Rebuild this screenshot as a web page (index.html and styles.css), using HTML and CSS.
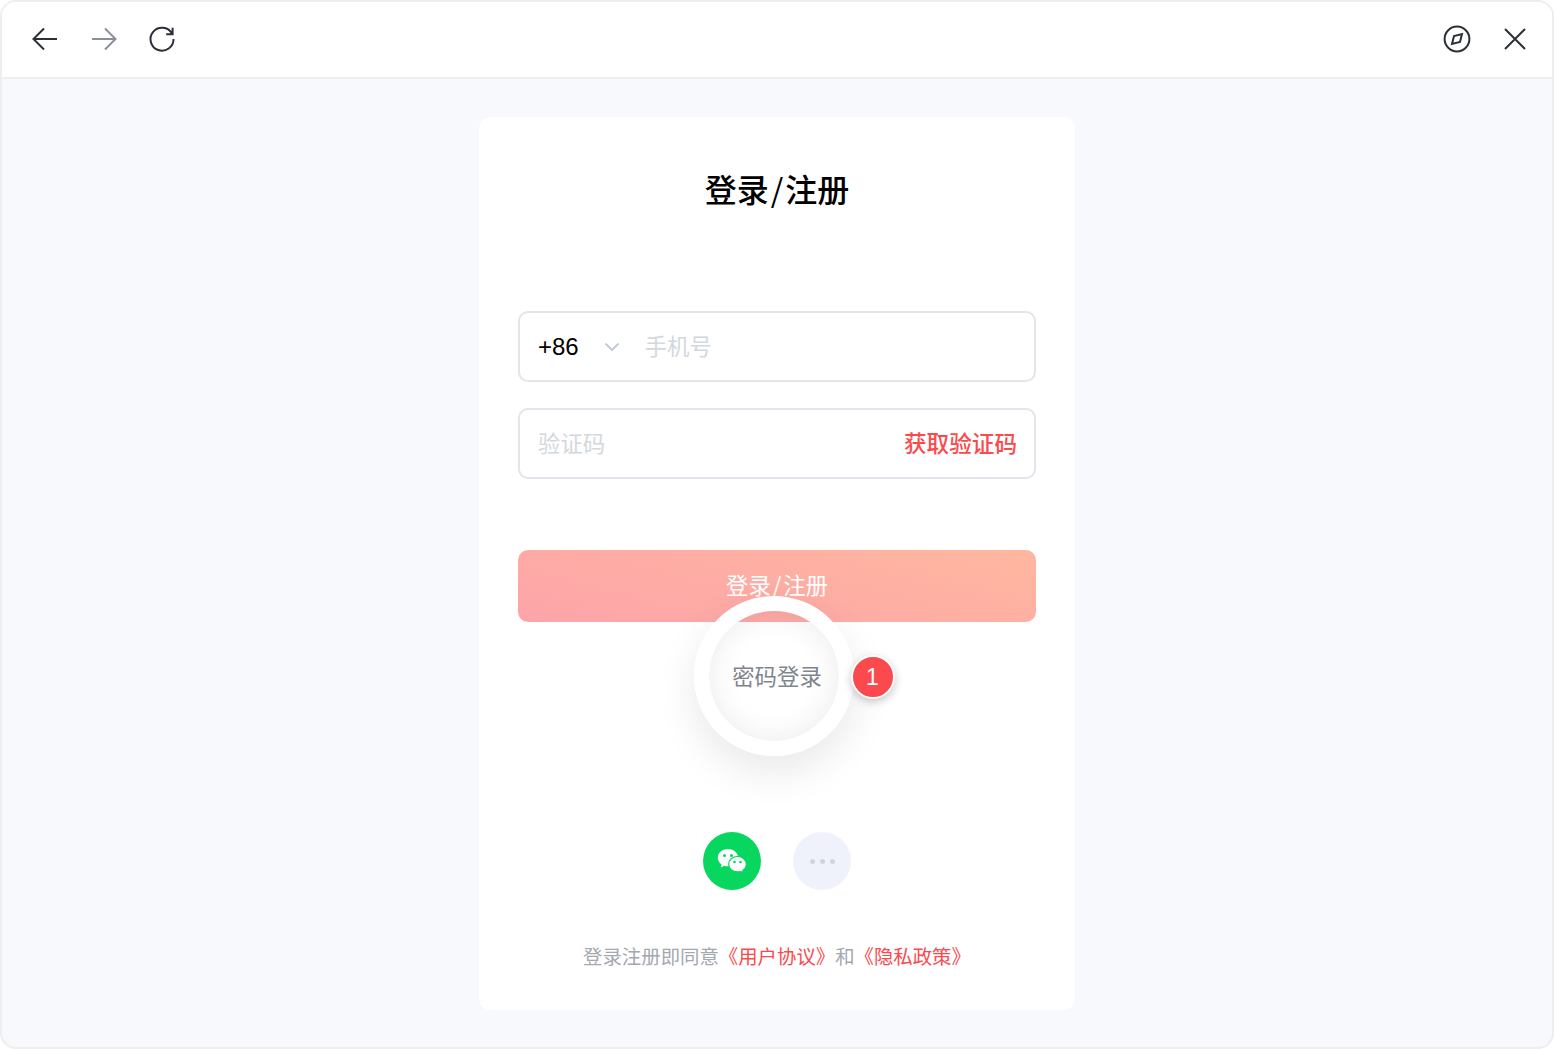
FILE: index.html
```html
<!DOCTYPE html>
<html lang="zh-CN">
<head>
  <meta charset="UTF-8" />
  <meta name="viewport" content="width=device-width, initial-scale=1" />
  <title>登录/注册</title>
  <link rel="stylesheet" href="styles.css">
</head>
<body>
  <div class="window">
    <header class="topbar">
      <div class="topbar-group topbar-nav">
        <svg class="icon" viewBox="0 0 30 30"><path d="M27 15H3.500M14 4.500 3.500 15 14 25.500"/></svg>
        <svg class="icon icon-off" viewBox="0 0 30 30"><path d="M3 15h23.500M16 4.500 26.500 15 16 25.500"/></svg>
        <svg class="icon" viewBox="0 0 30 30"><path d="M25 9.500A11.500 11.500 0 1 0 26.500 15M25.600 3.800v6.400h-6.400"/></svg>
      </div>
      <div class="topbar-group">
        <svg class="icon" viewBox="0 0 30 30"><circle cx="15" cy="15" r="12.400"/><path d="M20 10 18 18l-8 2 2-8z"/></svg>
        <svg class="icon" viewBox="0 0 30 30"><path d="M5 5l20 20M25 5 5 25"/></svg>
      </div>
    </header>

    <main class="content">
      <section class="card">
        <h1 class="title">登录<span class="slash">/</span>注册</h1>

        <form class="login-form">
          <div class="field">
            <span class="area-code">+86</span>
            <svg class="chevron" viewBox="0 0 16 10"><path d="M1.500 1.500 8 8l6.500-6.500"/></svg>
            <input class="field-input" type="tel" placeholder="手机号" />
          </div>
          <div class="field">
            <input class="field-input" type="text" placeholder="验证码" />
            <a class="get-code">获取验证码</a>
          </div>
          <button class="submit" type="button">登录<span class="slash">/</span>注册</button>
        </form>

        <div class="password-login">
          <span>密码登录</span>
          <span class="ring"></span>
          <span class="badge">1</span>
        </div>

        <div class="socials">
          <span class="social social-wechat">
            <svg viewBox="0 0 58 58">
              <path class="bubble" d="M25 17c-5.800 0-10.200 3.900-10.200 8.800 0 2.800 1.500 5.200 3.800 6.800l-.8 2.900 3.400-1.800c1.200.4 2.500.6 3.800.6 5.800 0 10.200-3.900 10.200-8.500S30.800 17 25 17z"/>
              <circle class="eye" cx="21.500" cy="23.500" r="1.500"/>
              <circle class="eye" cx="28.500" cy="23.500" r="1.500"/>
              <path class="bubble bubble-front" d="M34.500 24.500c-5 0-8.800 3.400-8.800 7.700s3.800 7.700 8.800 7.700c1 0 2-.2 3-.4l2.800 1.500-.6-2.600c2.200-1.400 3.600-3.600 3.600-6.200 0-4.300-3.800-7.700-8.800-7.700z"/>
              <circle class="eye" cx="31.500" cy="30" r="1.300"/>
              <circle class="eye" cx="37.500" cy="30" r="1.300"/>
            </svg>
          </span>
          <span class="social social-more">
            <i></i><i></i><i></i>
          </span>
        </div>

        <p class="agreement">登录注册即同意<a>《用户协议》</a>和<a>《隐私政策》</a></p>
      </section>
    </main>
  </div>
</body>
</html>
```

FILE: styles.css
```css
* {
  box-sizing: border-box;
}
body {
  margin: 0;
  background: #fff;
  font-family: "Liberation Sans", "Noto Sans CJK SC", sans-serif;
}
.window {
  height: 1049px;
  display: flex;
  flex-direction: column;
  border: 2px solid #eeeeee;
  border-radius: 16px;
  overflow: hidden;
  background: #f8f9fd;
}
.topbar {
  height: 77px;
  flex: none;
  display: flex;
  justify-content: space-between;
  align-items: center;
  padding: 0 22px 1px 28px;
  background: #fff;
  border-bottom: 2px solid #eeeff1;
}
.topbar-group {
  display: flex;
  gap: 28px;
}
.topbar-nav {
  gap: 28.500px;
}
.icon {
  width: 30px;
  height: 30px;
  fill: none;
  stroke: #2b2f36;
  stroke-width: 2;
}
.icon-off {
  stroke: #8a9099;
}
.content {
  flex: 1;
  display: flex;
  justify-content: center;
  padding-top: 38px;
}
.card {
  width: 596px;
  height: 893px;
  padding: 52px 39px 0;
  background: #fff;
  border-radius: 12px;
}
.title {
  margin: 0;
  font-size: 32px;
  line-height: 44px;
  font-weight: 500;
  text-align: center;
  color: #000;
}
.slash {
  font-family: "Noto Sans CJK SC", sans-serif;
  font-weight: 400;
  line-height: 0;
}
.title .slash {
  margin: 0 2px;
}
.login-form {
  margin-top: 98px;
  display: flex;
  flex-direction: column;
  gap: 26px;
}
.field {
  height: 71px;
  display: flex;
  align-items: center;
  padding: 0 17px 0 18px;
  border: 2px solid #e2e5eb;
  border-radius: 10px;
}
.area-code {
  padding-top: 1px;
  font-size: 24px;
  color: #000;
}
.chevron {
  width: 16px;
  height: 10px;
  margin: 0 25px 0 25px;
  fill: none;
  stroke: #c5cbd6;
  stroke-width: 2;
}
.field-input {
  flex: 1;
  min-width: 0;
  border: none;
  outline: none;
  padding: 2px 0 0;
  font: inherit;
  font-size: 22.400px;
}
.field-input::placeholder {
  color: #d3d8dd;
  opacity: 1;
}
.get-code {
  padding-bottom: 3px;
  font-size: 22.600px;
  font-weight: 500;
  color: #fb4a4d;
}
.submit {
  height: 72px;
  margin-top: 45px;
  padding: 0 0 4px;
  border: none;
  border-radius: 10px;
  background: linear-gradient(15deg, #fda4a9, #ffb79f);
  color: #fff;
  font: inherit;
  font-size: 22.400px;
}
.submit .slash {
  margin: 0 1.750px;
}
.password-login {
  position: relative;
  margin-top: 40px;
  height: 30px;
  line-height: 32px;
  text-align: center;
  font-size: 22.400px;
  color: #7f858e;
}
.ring {
  position: absolute;
  left: 176px;
  top: -66px;
  width: 160px;
  height: 160px;
  border: 15px solid #fff;
  border-radius: 50%;
  box-shadow: 0 16px 40px rgba(0, 0, 0, 0.09), inset 0 0 30px rgba(0, 0, 0, 0.08);
}
.badge {
  position: absolute;
  left: 332.500px;
  top: -7px;
  width: 44px;
  height: 44px;
  border: 2.500px solid #fff;
  border-radius: 50%;
  background: #fb4a4d;
  box-shadow: 0 3px 8px rgba(0, 0, 0, 0.22);
  color: #fff;
  font-size: 23px;
  font-weight: 500;
  line-height: 40px;
}
.socials {
  margin-top: 140px;
  display: flex;
  justify-content: center;
  gap: 32px;
}
.social {
  width: 58px;
  height: 58px;
  border-radius: 50%;
  display: flex;
  align-items: center;
  justify-content: center;
  gap: 5px;
}
.social-wechat {
  background: #08d75f;
}
.social-more {
  background: #eff2fa;
}
.social-more i {
  width: 5px;
  height: 5px;
  border-radius: 50%;
  background: #cfd4de;
}
.bubble {
  fill: #fff;
}
.bubble-front {
  stroke: #08d75f;
  stroke-width: 1.200;
}
.eye {
  fill: #08d75f;
}
.agreement {
  margin: 55px 0 0;
  line-height: 24px;
  text-align: center;
  font-size: 19.400px;
  color: #a3a8b1;
}
.agreement a {
  color: #fb4a4d;
}
```
